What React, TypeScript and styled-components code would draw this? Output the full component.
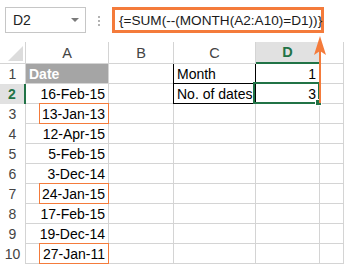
import React from "react";
import styled, { createGlobalStyle, css } from "styled-components";

const GREEN = "#217346";
const ORANGE = "#F47B3B";
const GRID = "#D4D4D4";

const GlobalStyle = createGlobalStyle`
  html, body {
    margin: 0;
    padding: 0;
    background: #fff;
  }
  body {
    width: 344px;
    height: 264px;
    overflow: hidden;
    font-family: "Liberation Sans", Arial, sans-serif;
  }
`;

const Sheet = styled.div`
  position: relative;
  width: 344px;
  height: 264px;
  overflow: hidden;
  background: #fff;
`;

const FormulaBar = styled.div`
  display: flex;
  align-items: flex-start;
  height: 42px;
  padding: 7px 0 0 5px;
  box-sizing: border-box;
`;

const NameBox = styled.div`
  display: flex;
  align-items: center;
  justify-content: space-between;
  width: 81px;
  height: 26px;
  box-sizing: border-box;
  border: 1px solid #c6c6c6;
  padding: 0 6px 0 7px;
  font-size: 14px;
  color: #222;
`;

const DropArrow = styled.span`
  width: 0;
  height: 0;
  border-left: 4px solid transparent;
  border-right: 4px solid transparent;
  border-top: 4px solid #7a7a7a;
`;

const Dots = styled.div`
  display: flex;
  flex-direction: column;
  gap: 2px;
  margin: 9px 12px 0 12px;
  span {
    width: 2px;
    height: 2px;
    background: #b3b3b3;
  }
`;

const FormulaBox = styled.div`
  display: flex;
  align-items: center;
  width: 212px;
  height: 26px;
  box-sizing: border-box;
  border: 3px solid ${ORANGE};
  padding-left: 4px;
  font-size: 13.6px;
  color: #1a1a1a;
  white-space: nowrap;
`;

const Grid = styled.div`
  display: grid;
  grid-template-columns: 26px 83px 65px 82px 64px 1fr;
  grid-template-rows: 22px repeat(10, 20px);
`;

const Corner = styled.div`
  position: relative;
  border-right: 1px solid ${GRID};
  border-bottom: 1px solid ${GRID};
  &::after {
    content: "";
    position: absolute;
    right: 2px;
    bottom: 2px;
    width: 0;
    height: 0;
    border-left: 15px solid transparent;
    border-bottom: 15px solid #dcdcdc;
  }
`;

const ColHeader = styled.div<{ $active?: boolean }>`
  display: flex;
  align-items: center;
  justify-content: center;
  font-size: 14.5px;
  color: #444;
  border-right: 1px solid ${GRID};
  border-bottom: 1px solid ${GRID};
  ${(p) =>
    p.$active &&
    css`
      background: #e1e1e1;
      color: ${GREEN};
      font-weight: bold;
      border-bottom: 2px solid ${GREEN};
    `}
`;

const RowHeader = styled.div<{ $active?: boolean }>`
  display: flex;
  align-items: center;
  justify-content: center;
  font-size: 14px;
  color: #444;
  border-right: 1px solid ${GRID};
  ${(p) =>
    p.$active &&
    css`
      background: #e1e1e1;
      color: ${GREEN};
      font-weight: bold;
      border-right: 2px solid ${GREEN};
    `}
`;

const Cell = styled.div<{ $align?: "left" | "right"; $boxed?: boolean }>`
  position: relative;
  display: flex;
  align-items: center;
  justify-content: ${(p) => (p.$align === "right" ? "flex-end" : "flex-start")};
  padding: 0 3px;
  font-size: 14px;
  color: #000;
  white-space: nowrap;
  border-right: 1px solid ${GRID};
  border-bottom: 1px solid ${GRID};
  ${(p) =>
    p.$boxed &&
    css`
      border-color: #000;
      border-left: 1px solid #000;
      margin-left: -1px;
    `}
`;

const HeadCell = styled(Cell)`
  background: #a5a5a5;
  color: #fff;
  font-weight: bold;
`;

const Callout = styled.span`
  position: absolute;
  top: -1px;
  bottom: -1px;
  right: -1px;
  width: 70px;
  border: 1px solid ${ORANGE};
  box-sizing: border-box;
`;

const Selection = styled.div`
  position: absolute;
  left: 253px;
  top: 82px;
  width: 67px;
  height: 22px;
  box-sizing: border-box;
  border: 2px solid ${GREEN};
  pointer-events: none;
  &::after {
    content: "";
    position: absolute;
    right: -4px;
    bottom: -4px;
    width: 5px;
    height: 5px;
    background: ${GREEN};
    border: 1px solid #fff;
  }
`;

const Arrow = styled.svg`
  position: absolute;
  left: 312px;
  top: 35px;
`;

const dates = [
  "16-Feb-15",
  "13-Jan-13",
  "12-Apr-15",
  "5-Feb-15",
  "3-Dec-14",
  "24-Jan-15",
  "17-Feb-15",
  "19-Dec-14",
  "27-Jan-11",
];
const marked = new Set([1, 5, 8]);
const side: Record<number, [string, string]> = {
  1: ["Month", "1"],
  2: ["No. of dates", "3"],
};

export default function App() {
  return (
    <Sheet>
      <GlobalStyle />
      <FormulaBar>
        <NameBox>
          D2
          <DropArrow />
        </NameBox>
        <Dots>
          <span />
          <span />
          <span />
        </Dots>
        <FormulaBox>{"{=SUM(--(MONTH(A2:A10)=D1))}"}</FormulaBox>
      </FormulaBar>
      <Grid>
        <Corner />
        {["A", "B", "C", "D", ""].map((c) => (
          <ColHeader key={c || "E"} $active={c === "D"}>
            {c}
          </ColHeader>
        ))}
        {Array.from({ length: 10 }, (_, i) => {
          const row = i + 1;
          const extra = side[row];
          return (
            <React.Fragment key={row}>
              <RowHeader $active={row === 2}>{row}</RowHeader>
              {row === 1 ? (
                <HeadCell>Date</HeadCell>
              ) : (
                <Cell $align="right">
                  {dates[i - 1]}
                  {marked.has(i - 1) && <Callout />}
                </Cell>
              )}
              <Cell />
              <Cell $boxed={!!extra}>{extra ? extra[0] : ""}</Cell>
              <Cell $align="right" $boxed={!!extra}>
                {extra ? extra[1] : ""}
              </Cell>
              <Cell />
            </React.Fragment>
          );
        })}
      </Grid>
      <Selection />
      <Arrow width="16" height="70" viewBox="0 0 16 70">
        <line x1="8" y1="12" x2="8" y2="68" stroke={ORANGE} strokeWidth="2" />
        <path d="M8 1 L14 20 L8 16 L2 20 Z" fill={ORANGE} />
      </Arrow>
    </Sheet>
  );
}
